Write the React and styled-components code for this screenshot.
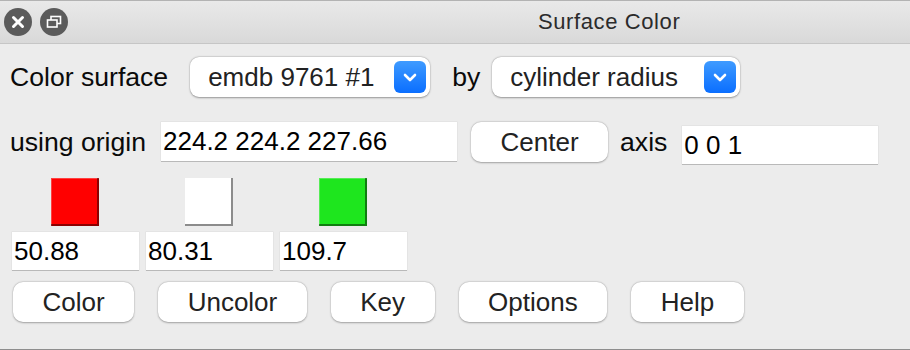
import React from "react";
import styled, { createGlobalStyle } from "styled-components";

const GlobalStyle = createGlobalStyle`
    html, body {
        margin: 0;
        padding: 0;
        background: #ececec;
    }
    * {
        box-sizing: border-box;
    }
`;

const Window = styled.div`
    width: 910px;
    height: 350px;
    background: #ececec;
    border-bottom: 1px solid #8e8e8e;
    font-family: "Liberation Sans", Arial, sans-serif;
    overflow: hidden;
`;

const TitleBar = styled.div`
    height: 44px;
    display: flex;
    align-items: center;
    padding-left: 4px;
    border-top: 1px solid #b3b3b3;
    border-bottom: 1px solid #c6c6c6;
    background: linear-gradient(#e9e9e9, #d9d9d9);
`;

const WinButton = styled.div`
    width: 28px;
    height: 28px;
    border-radius: 50%;
    background: #5b5b5b;
    margin-right: 8px;
    display: flex;
    align-items: center;
    justify-content: center;
`;

const Title = styled.div`
    margin-left: 462px;
    font-size: 22px;
    letter-spacing: 0.6px;
    color: #2b2b2b;
`;

const Content = styled.div`
    padding: 13px 0 0 10px;
    display: flex;
    flex-direction: column;
`;

const Row = styled.div`
    display: flex;
    align-items: ${(p) => p.$align || "center"};
    margin-top: ${(p) => p.$top || 0}px;
`;

const Label = styled.span`
    font-size: 26.6px;
    color: #0a0a0a;
    line-height: 40px;
    margin-left: ${(p) => p.$ml || 0}px;
    margin-right: ${(p) => p.$mr || 0}px;
    white-space: nowrap;
`;

const Popup = styled.div`
    width: ${(p) => p.$w}px;
    height: 40px;
    background: #fff;
    border-radius: 9px;
    box-shadow: 0 0.5px 2px rgba(0, 0, 0, 0.35), 0 0 0 0.5px rgba(0, 0, 0, 0.06);
    display: flex;
    align-items: center;
    justify-content: space-between;
    padding: 0 4px 0 18px;
    font-size: 26px;
    color: #222;
`;

const PopupArrow = styled.div`
    width: 32px;
    height: 32px;
    border-radius: 6px;
    background: linear-gradient(#3f9bff, #0a6eff);
    display: flex;
    align-items: center;
    justify-content: center;
`;

const Field = styled.div`
    width: ${(p) => p.$w}px;
    height: ${(p) => p.$h || 39}px;
    background: #fff;
    box-shadow: 0 1px 0 #b9b9b9, 0 0 0 0.5px #dcdcdc;
    font-size: 26px;
    color: #000;
    display: flex;
    align-items: center;
    padding-left: ${(p) => p.$pl || 2}px;
    margin-top: ${(p) => p.$mt || 0}px;
    margin-left: ${(p) => p.$ml || 0}px;
    white-space: nowrap;
`;

const Button = styled.div`
    height: 40px;
    padding: 0 29.5px;
    background: #fff;
    border-radius: 10px;
    box-shadow: 0 0.5px 2px rgba(0, 0, 0, 0.3), 0 0 0 0.5px rgba(0, 0, 0, 0.06);
    display: flex;
    align-items: center;
    justify-content: center;
    font-size: 26px;
    color: #222;
    margin-left: ${(p) => p.$ml || 0}px;
    white-space: nowrap;
`;

const ColorGrid = styled.div`
    display: flex;
    gap: 7px;
    margin-left: 2px;
`;

const ColorColumn = styled.div`
    display: flex;
    flex-direction: column;
    align-items: center;
    gap: 6px;
`;

const Swatch = styled.div`
    width: 48px;
    height: 48px;
    margin-left: -2px;
    background: ${(p) => p.$color};
    box-shadow: inset -2px -2px 0 rgba(0, 0, 0, 0.45), inset 1px 1px 0 rgba(255, 255, 255, 0.25);
`;

const ButtonBar = styled.div`
    display: flex;
    gap: 24px;
    margin: 12px 0 0 3px;
`;

function Chevron() {
    return (
        <svg width="14" height="9" viewBox="0 0 14 9">
            <path d="M2 2 L7 7 L12 2" fill="none" stroke="#fff" strokeWidth="2.6" strokeLinecap="round" strokeLinejoin="round" />
        </svg>
    );
}

const colors = [
    { color: "#ff0000", value: "50.88" },
    { color: "#ffffff", value: "80.31" },
    { color: "#1ee61e", value: "109.7" },
];

export default function App() {
    return (
        <Window>
            <GlobalStyle />
            <TitleBar>
                <WinButton>
                    <svg width="14" height="14" viewBox="0 0 14 14">
                        <path d="M2.5 2.5 L11.5 11.5 M11.5 2.5 L2.5 11.5" stroke="#fff" strokeWidth="3" strokeLinecap="round" />
                    </svg>
                </WinButton>
                <WinButton>
                    <svg width="16" height="14" viewBox="0 0 16 14">
                        <rect x="5" y="1.5" width="9.5" height="7" fill="none" stroke="#fff" strokeWidth="1.6" />
                        <rect x="1.5" y="5" width="9.5" height="7" fill="#5b5b5b" stroke="#fff" strokeWidth="1.6" />
                    </svg>
                </WinButton>
                <Title>Surface Color</Title>
            </TitleBar>
            <Content>
                <Row>
                    <Label $mr={22}>Color surface</Label>
                    <Popup $w={240}>
                        emdb 9761 #1
                        <PopupArrow><Chevron /></PopupArrow>
                    </Popup>
                    <Label $ml={22} $mr={12}>by</Label>
                    <Popup $w={248}>
                        cylinder radius
                        <PopupArrow><Chevron /></PopupArrow>
                    </Popup>
                </Row>
                <Row $top={25} $align="flex-start">
                    <Label $mr={15}>using origin</Label>
                    <Field $w={296}>224.2 224.2 227.66</Field>
                    <Button $ml={14}>Center</Button>
                    <Label $ml={12} $mr={15}>axis</Label>
                    <Field $w={196} $h={38} $mt={4}>0 0 1</Field>
                </Row>
                <Row $top={14}>
                    <ColorGrid>
                        {colors.map((c) => (
                            <ColorColumn key={c.value}>
                                <Swatch $color={c.color} />
                                <Field $w={127} $h={38}>{c.value}</Field>
                            </ColorColumn>
                        ))}
                    </ColorGrid>
                </Row>
                <ButtonBar>
                    <Button>Color</Button>
                    <Button>Uncolor</Button>
                    <Button>Key</Button>
                    <Button>Options</Button>
                    <Button>Help</Button>
                </ButtonBar>
            </Content>
        </Window>
    );
}
